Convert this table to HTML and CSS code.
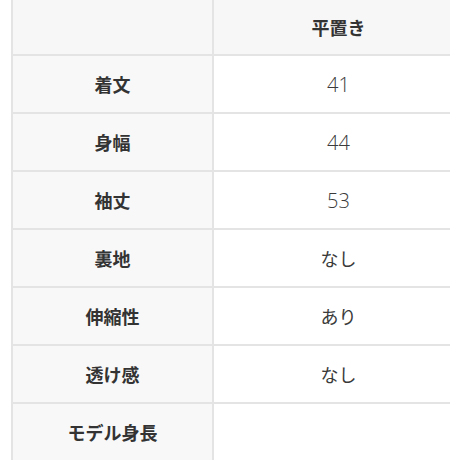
FILE: index.html
```html
<!DOCTYPE html>
<html lang="ja">
<head>
<meta charset="utf-8">
<link rel="stylesheet" href="styles.css">
</head>
<body>
<table class="size-table">
  <tr class="head-row">
    <th class="label"></th>
    <th class="value head">平置き</th>
  </tr>
  <tr><th class="label">着文</th><td class="value"><span class="num">41</span></td></tr>
  <tr><th class="label">身幅</th><td class="value"><span class="num">44</span></td></tr>
  <tr><th class="label">袖丈</th><td class="value"><span class="num">53</span></td></tr>
  <tr><th class="label">裏地</th><td class="value">なし</td></tr>
  <tr><th class="label">伸縮性</th><td class="value">あり</td></tr>
  <tr><th class="label">透け感</th><td class="value">なし</td></tr>
  <tr><th class="label">モデル身長</th><td class="value"></td></tr>
</table>
</body>
</html>
```

FILE: styles.css
```css
html, body {
  margin: 0;
  padding: 0;
  background: #ffffff;
}
body {
  font-family: "Noto Sans CJK JP", "Noto Sans", sans-serif;
  color: #333333;
  padding-left: 11px;
}
.size-table {
  border-collapse: collapse;
  width: 439px;
  table-layout: fixed;
}
.size-table th, .size-table td {
  height: 56px;
  padding: 0;
  text-align: center;
  vertical-align: middle;
  font-size: 18px;
  border-bottom: 2px solid #e4e4e4;
}
.head-row th {
  height: 54px;
  background: #f7f7f7;
}
.label {
  width: 199px;
  background: #f8f8f8;
  font-weight: 700;
  border-left: 2px solid #e4e4e4;
  border-right: 2px solid #e4e4e4;
}
.value {
  font-family: "Noto Sans CJK JP", sans-serif;
  font-weight: 400;
  color: #3a3a3a;
  font-size: 18px;
  padding-left: 13px !important;
}
.num {
  font-family: "Open Sans", sans-serif;
  font-weight: 300;
  font-size: 20px;
}
.value.head {
  font-weight: 700;
  color: #333333;
}
```
